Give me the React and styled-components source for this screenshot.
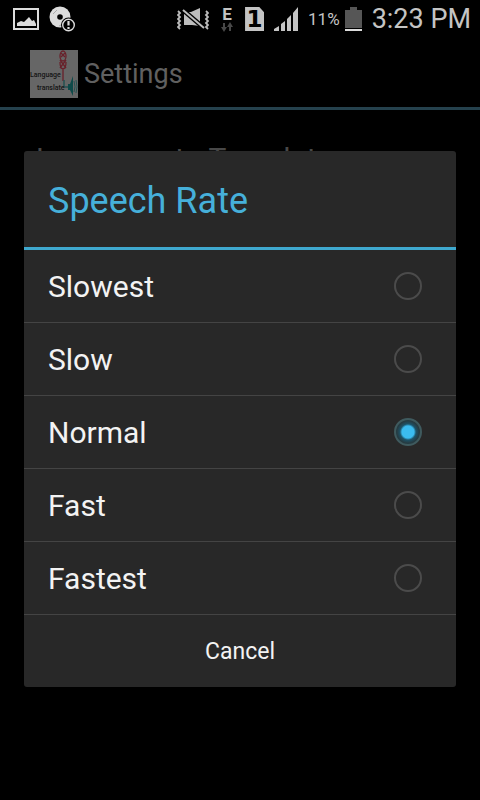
import { useState } from 'react';
import styled, { createGlobalStyle } from 'styled-components';

const rates = ['Slowest', 'Slow', 'Normal', 'Fast', 'Fastest'];

function PictureIcon() {
  return (
    <svg width='26' height='24' viewBox='0 0 26 24' aria-hidden='true'>
      <rect x='1' y='2' width='24' height='20' fill='none' stroke='#dcdcdc' strokeWidth='2' />
      <path d='M4 19v-3l4-2 3 1 5-5 3 4 2-1 2 4v2z' fill='#dcdcdc' />
    </svg>
  );
}

function DiscIcon() {
  return (
    <svg width='27' height='27' viewBox='0 0 27 27' aria-hidden='true'>
      <circle cx='11' cy='11' r='10.5' fill='#dcdcdc' />
      <path d='M4 8l4-4M14 18l-4 2' stroke='#aaa' strokeWidth='1' />
      <circle cx='11' cy='11' r='2.8' fill='#000' />
      <circle cx='19.5' cy='19' r='7.5' fill='#000' />
      <circle cx='19.5' cy='19' r='5.8' fill='#000' stroke='#dcdcdc' strokeWidth='1.4' />
      <path d='M19.5 15v4.5M19.5 21v2' stroke='#dcdcdc' strokeWidth='2.2' />
    </svg>
  );
}

function MuteIcon() {
  return (
    <svg width='32' height='22' viewBox='0 0 32 22' aria-hidden='true'>
      <path d='M7 4h7l9-4v18l-8-1H7z' fill='#bdbdbd' />
      <path d='M6 2l21 18' stroke='#000' strokeWidth='4.6' />
      <path d='M6 2l21 18' stroke='#bdbdbd' strokeWidth='2' />
      <path
        d='M1 3l2 2-2 2 2 2-2 2 2 2-2 2 2 2-2 2 2 2M29 3l2 2-2 2 2 2-2 2 2 2-2 2 2 2-2 2 2 2'
        fill='none'
        stroke='#bdbdbd'
        strokeWidth='1.8'
      />
    </svg>
  );
}

function DataArrows() {
  return (
    <svg width='12' height='10' viewBox='0 0 12 10' aria-hidden='true'>
      <path d='M2 1h2v4h2l-3 5-3-5h2zM8 9h2V5h2L9 0 6 5h2z' fill='#484848' />
    </svg>
  );
}

function SignalIcon() {
  return (
    <svg width='24' height='24' viewBox='0 0 24 24' aria-hidden='true'>
      <path d='M0 24v-2l5-3v5zM7 24v-7l4-3v10zM13 24V12l4-4v16zM19 24V6l5-6v24z' fill='#c4c4c4' />
    </svg>
  );
}

function BatteryIcon() {
  return (
    <svg width='17' height='24' viewBox='0 0 17 24' aria-hidden='true'>
      <path d='M0 3h5V0h7v3h5v18H0z' fill='#565656' />
      <path d='M0 22h17v2H0z' fill='#dcdcdc' />
    </svg>
  );
}

function AppLogo() {
  return (
    <svg width='48' height='48' viewBox='0 0 48 48' aria-hidden='true'>
      <rect width='48' height='48' fill='#666' />
      <g fill='none' stroke='#68202a' strokeWidth='1.3'>
        <ellipse cx='33' cy='6' rx='3' ry='5' />
        <path d='M31 3l4 4M31 7l4-4M30 10l6 8M36 10l-6 8M30 12c0 9 6 9 6 0M33 19v12' />
      </g>
      <path d='M34 30v7h4' fill='none' stroke='#245252' strokeWidth='1.5' />
      <path d='M38 34h2l3-8v20l-3-6h-2z' fill='#0e4a49' />
      <path d='M44 31q2 6 0 11M46 30q2 7 0 13' fill='none' stroke='#245252' />
      <g fill='#141414' fontSize='7' fontWeight='500'>
        <text x='0' y='27'>Language</text>
        <text x='7' y='40'>translate</text>
      </g>
    </svg>
  );
}

function App() {
  const [rate, setRate] = useState('Normal');
  const [open, setOpen] = useState(true);

  return (
    <>
      <GlobalStyle />
      <Screen>
        <StatusBar>
          <PictureIcon />
          <DiscIcon />
          <StatusRight>
            <MuteIcon />
            <Network>
              <span>E</span>
              <DataArrows />
            </Network>
            <SimCard>1</SimCard>
            <SignalIcon />
            <Battery>
              <span>11%</span>
              <BatteryIcon />
            </Battery>
            <Clock>3:23 PM</Clock>
          </StatusRight>
        </StatusBar>
        <AppBar>
          <AppLogo />
          <h1>Settings</h1>
        </AppBar>
        <Preference>Language to Translate</Preference>
        {open && (
          <Overlay>
            <Dialog role='dialog' aria-labelledby='rate-title'>
              <DialogTitle id='rate-title'>Speech Rate</DialogTitle>
              {rates.map((name) => (
                <Option key={name}>
                  {name}
                  <Radio
                    type='radio'
                    name='rate'
                    value={name}
                    checked={rate === name}
                    onChange={() => setRate(name)}
                  />
                </Option>
              ))}
              <CancelButton type='button' onClick={() => setOpen(false)}>
                Cancel
              </CancelButton>
            </Dialog>
          </Overlay>
        )}
      </Screen>
    </>
  );
}

const GlobalStyle = createGlobalStyle`
  body {
    margin: 0;
    background: #000;
    font-family: Roboto, sans-serif;
  }
`;

const Screen = styled.div`
  position: relative;
  min-height: 100vh;
  background: #000;
`;

const StatusBar = styled.header`
  display: flex;
  align-items: center;
  gap: 10px;
  height: 38px;
  padding: 0 9px 0 13px;
  color: #c4c4c4;
`;

const StatusRight = styled.div`
  display: flex;
  align-items: center;
  margin-left: auto;
  gap: 10px;
`;

const Network = styled.div`
  display: flex;
  flex-direction: column;
  align-items: center;
  width: 16px;
  font-size: 17px;
  line-height: 15px;
  font-weight: 700;
`;

const SimCard = styled.span`
  width: 19px;
  background: #c4c4c4;
  color: #000;
  clip-path: polygon(0 0, 75% 0, 100% 22%, 100% 100%, 0 100%);
  font-family: 'DejaVu Sans', sans-serif;
  font-size: 23px;
  line-height: 24px;
  font-weight: 700;
  text-align: center;
`;

const Battery = styled.div`
  display: flex;
  align-items: center;
  gap: 5px;
  font-size: 17px;
`;

const Clock = styled.time`
  font-size: 27px;
`;

const AppBar = styled.div`
  display: flex;
  align-items: center;
  gap: 6px;
  height: 67px;
  padding: 2px 0 0 30px;
  border-bottom: 3px solid #25414d;
  color: #606060;

  h1 {
    margin: 0;
    font-size: 27px;
    font-weight: 400;
  }
`;

const Preference = styled.p`
  margin: 0;
  padding: 31px 36px;
  color: #484848;
  font-size: 30px;
  line-height: 36px;
`;

const Overlay = styled.div`
  position: absolute;
  inset: 38px 0 0;
  display: flex;
  align-items: center;
  justify-content: center;
  padding: 0 24px;
`;

const Dialog = styled.section`
  flex: 1;
  overflow: hidden;
  border-radius: 3px;
  background: #282828;
  color: #f3f3f3;
`;

const DialogTitle = styled.h2`
  margin: 0;
  padding: 4px 24px 0;
  border-bottom: 3px solid #3fa9cf;
  color: #46b0da;
  font-size: 36px;
  line-height: 92px;
  font-weight: 400;
`;

const Option = styled.label`
  display: flex;
  align-items: center;
  justify-content: space-between;
  height: 72px;
  padding: 0 34px 0 24px;
  border-bottom: 1px solid #444;
  font-size: 30px;
`;

const Radio = styled.input`
  appearance: none;
  width: 28px;
  height: 28px;
  margin: 0;
  border: 2px solid #4b4b4b;
  border-radius: 50%;

  &:checked {
    border-color: #3f5a5e;
    background: radial-gradient(circle, #3bbcf0 0 6px, #1d5368 8px, #263c43 11px);
  }
`;

const CancelButton = styled.button`
  display: block;
  width: 100%;
  padding: 2px 0 0;
  border: 0;
  background: none;
  color: inherit;
  font-family: inherit;
  font-size: 23px;
  line-height: 70px;
`;

export default App;
